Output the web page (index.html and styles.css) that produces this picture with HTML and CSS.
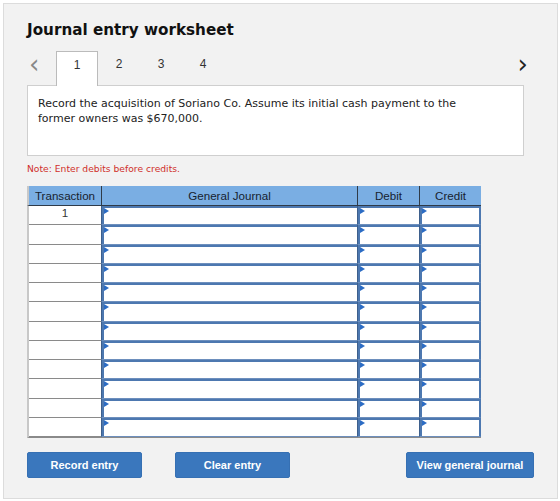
FILE: index.html
```html
<!DOCTYPE html>
<html lang="en">
<head>
  <meta charset="UTF-8" />
  <title>Journal entry worksheet</title>
  <link rel="stylesheet" href="styles.css">
</head>
<body>
  <div class="worksheet">
    <h2>Journal entry worksheet</h2>

    <div class="tabs">
      <span class="arrow">&lsaquo;</span>
      <span class="tab active">1</span>
      <span class="tab">2</span>
      <span class="tab">3</span>
      <span class="tab">4</span>
      <span class="arrow next">&rsaquo;</span>
    </div>

    <div class="prompt">
      Record the acquisition of Soriano Co. Assume its initial cash payment to the
      former owners was $670,000.
    </div>

    <p class="note">Note: Enter debits before credits.</p>

    <div class="journal">
      <div class="head trans">Transaction</div>
      <div class="head">General Journal</div>
      <div class="head">Debit</div>
      <div class="head">Credit</div>
      <div id="rows" class="rows"></div>
    </div>

    <div class="actions">
      <button class="btn">Record entry</button>
      <button class="btn clear">Clear entry</button>
      <button class="btn wide">View general journal</button>
    </div>
  </div>

  <script>
    // 12 blank journal lines, the first one numbered
    const rows = document.getElementById("rows");
    for (let i = 0; i < 12; i++) {
      rows.innerHTML += `
        <div class="cell trans">${i === 0 ? "1" : ""}</div>
        <div class="cell entry"><div class="field"></div></div>
        <div class="cell entry"><div class="field"></div></div>
        <div class="cell entry"><div class="field"></div></div>
      `;
    }
  </script>
</body>
</html>
```

FILE: styles.css
```css
body {
  margin: 0;
  background: #fff;
  font-family: "DejaVu Sans", Verdana, sans-serif;
}
.worksheet {
  margin: 3px;
  width: 530px;
  height: 478px;
  padding: 16px 0 0 23px;
  background: #f2f2f2;
  border: 1px solid #dcdcdc;
}
h2 {
  margin: 0;
  font-size: 15.2px;
  line-height: 20px;
  color: #111;
}
.tabs {
  display: flex;
  height: 34px;
  margin-top: 11px;
  width: 497px;
  position: relative;
  z-index: 1;
}
.arrow {
  width: 29px;
  font-size: 26px;
  line-height: 26px;
  color: #888;
  padding-left: 2px;
  box-sizing: border-box;
}
.arrow.next {
  margin-left: auto;
  width: auto;
  color: #222;
  position: relative;
  left: 4px;
}
.tab {
  width: 42px;
  text-align: center;
  font-family: "Liberation Sans", Arial, sans-serif;
  font-size: 12px;
  line-height: 26px;
  color: #333;
  box-sizing: border-box;
}
.tab.active {
  background: #fff;
  border: 1px solid #bbb;
  border-bottom: none;
  height: 35px;
}
.prompt {
  width: 497px;
  height: 71px;
  box-sizing: border-box;
  background: #fff;
  border: 1px solid #cfcfcf;
  padding: 10px 50px 10px 10px;
  font-size: 11px;
  line-height: 15px;
  color: #222;
}
.note {
  margin: 7px 0 0;
  font-size: 9.2px;
  line-height: 12px;
  color: #d0302b;
}
.journal {
  display: grid;
  grid-template-columns: 74px 256px 62px 62px;
  margin-top: 11px;
  width: 454px;
  font-family: "Liberation Sans", Arial, sans-serif;
  font-size: 11.6px;
}
.rows {
  display: grid;
  grid-column: 1 / -1;
  grid-template-columns: subgrid;
  grid-auto-rows: 19.25px;
  background: #fff;
  border-left: 2px solid #c8c8c8;
  border-bottom: 1px solid #8a8a8a;
}
.head {
  height: 20px;
  line-height: 19px;
  text-align: center;
  background: #7aaee3;
  color: #17222f;
  border-left: 1px solid #2f3b48;
  border-bottom: 1px solid #2f3b48;
  box-sizing: border-box;
}
.head.trans {
  border-left: 2px solid #c8c8c8;
}
.head:last-of-type {
  border-right: 1px solid #2f3b48;
}
.cell {
  box-sizing: border-box;
}
.cell.trans {
  border-bottom: 1px solid #8a8a8a;
  text-align: center;
  line-height: 14px;
  color: #333;
}
.cell.entry {
  border-left: 1px solid #3d5f8c;
  border-bottom: 1px solid #6d8fbd;
  background: #4d78b0;
  padding: 2px 0 0 2px;
}
.cell.entry:nth-child(4n) {
  border-right: 1px solid #4d78b0;
  padding-right: 1px;
}
.field {
  position: relative;
  height: 100%;
  background: #fff;
}
.field::before {
  content: "";
  position: absolute;
  left: 0;
  top: 0;
  border-top: 3px solid transparent;
  border-bottom: 3px solid transparent;
  border-left: 5px solid #2c6cc4;
}
.actions {
  display: flex;
  margin-top: 14px;
  margin-right: 23px;
}
.btn {
  flex-shrink: 0;
  width: 115px;
  height: 26px;
  background: #3a77bd;
  border: 1px solid #3670b3;
  border-radius: 2px;
  color: #fff;
  font-family: "Liberation Sans", Arial, sans-serif;
  font-weight: bold;
  font-size: 11px;
  cursor: pointer;
}
.btn.clear {
  margin-left: 33px;
}
.btn.wide {
  width: 128px;
  margin-left: auto;
}
```
